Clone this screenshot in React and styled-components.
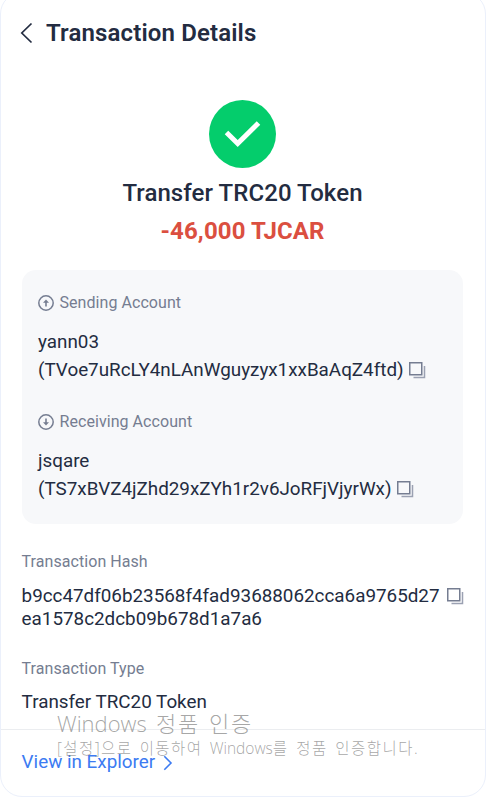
import React from 'react';
import styled, { createGlobalStyle } from 'styled-components';

const GlobalStyle = createGlobalStyle`
  * {
    box-sizing: border-box;
  }

  body {
    margin: 0;
    height: 800px;
    overflow: hidden;
    background: #ffffff;
    color: #232c41;
    font-family: Roboto, sans-serif;
  }
`;

const Page = styled.div`
  position: relative;
  display: flow-root;
  height: 800px;
  overflow: hidden;
`;

const Card = styled.main`
  display: flex;
  flex-direction: column;
  width: 486px;
  height: 805px;
  margin-top: -8px;
  border: 1px solid #ebf0fb;
  border-radius: 22px;
  background: #ffffff;
`;

const Header = styled.header`
  display: flex;
  align-items: center;
  gap: 13px;
  padding: 24px 20px 0 19px;
`;

const BackButton = styled.button`
  display: flex;
  padding: 0;
  border: none;
  background: none;
  color: #232c41;
`;

const Title = styled.h1`
  margin: 0;
  font-size: 24px;
  font-weight: 600;
  line-height: 32px;
  letter-spacing: 0.14px;
`;

const Summary = styled.section`
  display: flex;
  flex-direction: column;
  align-items: center;
  padding-top: 51px;
  padding-right: 1px;
`;

const Status = styled.h2`
  margin: 9px 0 0;
  font-size: 24px;
  font-weight: 500;
  line-height: 32px;
  letter-spacing: 0.08px;
`;

const Amount = styled.p`
  margin: 6px 0 0;
  font-size: 24px;
  font-weight: 700;
  line-height: 32px;
  letter-spacing: 0.12px;
  color: #db4f40;
`;

const Accounts = styled.section`
  display: flex;
  flex-direction: column;
  gap: 27px;
  height: 254px;
  margin: 23px 22px 0 21px;
  padding: 23px 16px 0;
  border-radius: 14px;
  background: #f7f8fa;
`;

const Label = styled.div`
  display: flex;
  align-items: center;
  gap: 5.5px;
  font-size: 16px;
  line-height: 20px;
  letter-spacing: 0.06px;
  color: #757d91;
`;

const AccountValue = styled.div`
  margin-top: 15px;
  margin-bottom: 1px;
  font-size: 18.84px;
  line-height: 28px;
`;

const AddressLine = styled.div`
  display: flex;
  align-items: center;
  gap: 5.2px;
  height: 28px;
  white-space: nowrap;
`;

const Field = styled.section`
  padding: ${({ $top }) => $top}px 21.4px 0 20.6px;
`;

const FieldValue = styled.div`
  display: flex;
  justify-content: space-between;
  align-items: flex-start;
  margin-top: ${({ $gap }) => $gap}px;
  font-size: 18.84px;
  line-height: 23px;
`;

const Hash = styled.span`
  width: 420px;
  white-space: nowrap;
`;

const CopySlot = styled.span`
  display: flex;
  padding-top: 3px;
`;

const Footer = styled.footer`
  margin-top: auto;
  height: 67px;
  padding: 21px 20.6px 0;
  border-top: 1px solid #ebedf0;
`;

const ExplorerLink = styled.a`
  display: inline-flex;
  align-items: center;
  gap: 8px;
  font-size: 18.84px;
  line-height: 23px;
  color: #3c7bf2;
`;

const Watermark = styled.div`
  position: absolute;
  left: 57px;
  top: 708px;
  color: rgba(100, 100, 100, 0.58);
  font-family: 'Open Sans', 'Noto Sans CJK KR', sans-serif;
  font-weight: 300;
  white-space: nowrap;
  pointer-events: none;
`;

const WatermarkTitle = styled.div`
  font-size: 22px;
  line-height: 30px;
`;

const WatermarkText = styled.div`
  font-size: 15.5px;
  line-height: 20px;
`;

const Hangul = styled.span`
  letter-spacing: ${({ $spacing }) => $spacing}px;
  word-spacing: ${({ $word }) => $word}px;
`;

const CopyIcon = () => (
  <svg width="17" height="17" viewBox="0 0 17 17" fill="none">
    <path d="M0.75 0.75h12v12h-12z" stroke="#757d91" strokeWidth="1.5" />
    <path d="M15.5 4v11.5H4.5" stroke="#9ba1b2" strokeWidth="1.5" />
  </svg>
);

const ArrowCircle = ({ down }) => (
  <svg width="16" height="16" viewBox="0 0 16 16" fill="none">
    <circle cx="8" cy="8" r="7.2" stroke="#757d91" strokeWidth="1.5" />
    <g transform={down ? 'rotate(180 8 8)' : undefined}>
      <path d="M8 11.6V6" stroke="#757d91" strokeWidth="1.6" />
      <path d="M8 4.4L11 7.8H5z" fill="#757d91" />
    </g>
  </svg>
);

const accounts = [
  { label: 'Sending Account', name: 'yann03', address: '(TVoe7uRcLY4nLAnWguyzyx1xxBaAqZ4ftd)' },
  { label: 'Receiving Account', name: 'jsqare', address: '(TS7xBVZ4jZhd29xZYh1r2v6JoRFjVjyrWx)', down: true },
];

const App = () => {
  return (
    <Page>
      <GlobalStyle />
      <Card>
        <Header>
          <BackButton aria-label="Back">
            <svg width="13" height="22" viewBox="0 0 13 22" fill="none">
              <path d="M11.5 1.5L1.8 11l9.7 9.5" stroke="currentColor" strokeWidth="1.7" />
            </svg>
          </BackButton>
          <Title>Transaction Details</Title>
        </Header>

        <Summary>
          <svg width="68" height="68" viewBox="0 0 68 68" fill="none">
            <ellipse cx="33.5" cy="34" rx="33.5" ry="34" fill="#04cd6c" />
            <path d="M17.5 32.5L28.7 43.5L49.5 23" stroke="#ffffff" strokeWidth="5" />
          </svg>
          <Status>Transfer TRC20 Token</Status>
          <Amount>-46,000 TJCAR</Amount>
        </Summary>

        <Accounts>
          {accounts.map(({ label, name, address, down }) => (
            <div key={label}>
              <Label>
                <ArrowCircle down={down} />
                {label}
              </Label>
              <AccountValue>
                {name}
                <AddressLine>
                  {address}
                  <CopyIcon />
                </AddressLine>
              </AccountValue>
            </div>
          ))}
        </Accounts>

        <Field $top={28}>
          <Label>Transaction Hash</Label>
          <FieldValue $gap={13}>
            <Hash>
              b9cc47df06b23568f4fad93688062cca6a9765d27
              <br />
              ea1578c2dcb09b678d1a7a6
            </Hash>
            <CopySlot>
              <CopyIcon />
            </CopySlot>
          </FieldValue>
        </Field>

        <Field $top={28}>
          <Label>Transaction Type</Label>
          <FieldValue $gap={12}>Transfer TRC20 Token</FieldValue>
        </Field>

        <Footer>
          <ExplorerLink>
            View in Explorer
            <svg width="10" height="16" viewBox="0 0 10 16" fill="none">
              <path d="M1.3 1.3L8 8l-6.7 6.7" stroke="currentColor" strokeWidth="1.6" />
            </svg>
          </ExplorerLink>
        </Footer>
      </Card>

      <Watermark>
        <WatermarkTitle>
          Windows<Hangul $spacing={1.7} $word={1.8}> 정품 인증</Hangul>
        </WatermarkTitle>
        <WatermarkText>
          <Hangul $spacing={1.4} $word={1.9}>[설정]으로 이동하여 </Hangul>
          Windows
          <Hangul $spacing={1.5} $word={2}>를 정품 인증합니다.</Hangul>
        </WatermarkText>
      </Watermark>
    </Page>
  );
};

export default App;
